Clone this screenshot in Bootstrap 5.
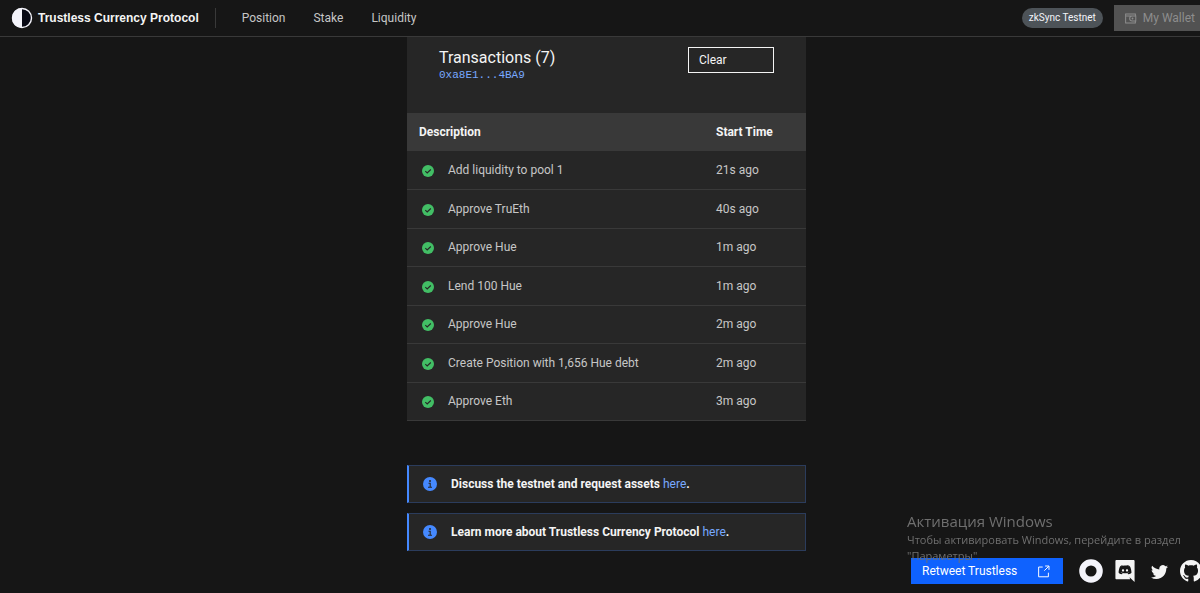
<!DOCTYPE html>
<html lang="en">
<head>
<meta charset="utf-8">
<meta name="viewport" content="width=device-width, initial-scale=1">
<title>Trustless Currency Protocol</title>
<link href="https://cdn.jsdelivr.net/npm/bootstrap@5.3.0/dist/css/bootstrap.min.css" rel="stylesheet">
<style>
  body { background: #161616; color: #f4f4f4; font: 12px/16px Roboto, "Liberation Sans", sans-serif; }
  a { color: #78a9ff; text-decoration: none; }
  .topbar { height: 37px; padding-left: 11px; border-bottom: 1px solid #393939; }
  .brand { color: #f4f4f4; font: 700 12px/20px "Liberation Sans", sans-serif; gap: 5px; }
  .rule { width: 1px; height: 20px; background: #393939; }
  .topnav { gap: 28px; padding-left: 26px; }
  .topnav a { color: #c6c6c6; }
  .net-tag { background: #4d5358; color: #f2f4f8; font-size: 10px; line-height: 20px; padding: 0 7px; }
  .square { border-radius: 0; font: inherit; text-align: left; }
  .wallet { background: #525252; color: #8d8d8d; height: 26px; padding: 0 5px 0 10px; margin-left: 11px; border: 0; gap: 6px; }
  .column { max-width: 412px; padding-left: 13px; }
  .panel { background: #262626; }
  .panel-head { height: 76px; padding: 10px 32px 0; }
  .panel h1 { font-size: 16px; line-height: 22px; font-weight: 400; }
  .address { font: 11px/12px "Liberation Mono", monospace; }
  .clear { width: 86px; height: 26px; border: 1px solid #f4f4f4; background: transparent; color: #f4f4f4; padding: 0 10px; }
  .tx { width: 100%; height: 308px; }
  .tx th { background: #393939; font-weight: 700; padding: 0 12px; height: 38px; }
  .tx td { color: #c6c6c6; border-bottom: 1px solid #393939; padding: 0 12px; height: 38px; }
  .tx .when { width: 102px; }
  .tx svg { width: 12px; height: 12px; margin: 0 14px 0 3px; }
  .notes { margin-top: 44px; gap: 10px; }
  .note { background: #262626; border: 1px solid #2b3c5c; border-left: 2px solid #4589ff; height: 38px; padding: 0 14px; gap: 14px; font-weight: 700; }
  .note a { font-weight: 400; }
  .social { bottom: 9px; }
  .retweet { background: #0f62fe; color: #fff; width: 152px; height: 26px; border: 0; padding: 0 13px 0 11px; }
  .watermark { right: 12px; bottom: 29px; width: 281px; color: #6f6f6f; pointer-events: none; font-family: "Open Sans", "Noto Sans", sans-serif; font-size: 11px; }
  .watermark strong { font-size: 15px; line-height: 22px; font-weight: 400; }
</style>
</head>
<body>
<header class="topbar d-flex align-items-center">
  <a class="brand d-flex align-items-center" href="#">
    <svg width="22" height="22" viewBox="0 0 22 22" aria-hidden="true"><circle cx="11" cy="11" r="9.5" fill="#080914" stroke="#f4f4fb" stroke-width="1.4"/><path d="M11 1a10 10 0 0 0 0 20z" fill="#f4f4fb"/></svg>
    Trustless Currency Protocol
  </a>
  <span class="rule ms-3"></span>
  <nav class="topnav d-flex">
    <a href="#">Position</a>
    <a href="#">Stake</a>
    <a href="#">Liquidity</a>
  </nav>
  <span class="net-tag rounded-pill ms-auto">zkSync Testnet</span>
  <button class="wallet square d-flex align-items-center" type="button" disabled>
    <svg width="13" height="13" viewBox="0 0 32 32" fill="none" stroke="currentColor" stroke-width="2.5" aria-hidden="true"><path d="M28 10V5H4v22h24v-5M4 10h25v12h-9a6 6 0 0 1 0-12"/><circle cx="21" cy="16" r="1"/></svg>
    My Wallet
  </button>
</header>

<main class="column mx-auto">
  <section class="panel">
    <div class="panel-head d-flex justify-content-between">
      <div>
        <h1 class="m-0">Transactions (7)</h1>
        <a class="address d-block" href="#">0xa8E1...4BA9</a>
      </div>
      <button class="clear square" type="button">Clear</button>
    </div>
    <table class="tx">
      <thead><tr><th scope="col">Description</th><th class="when" scope="col">Start Time</th></tr></thead>
      <tbody>
        <tr><td><svg viewBox="0 0 12 12"><use href="#done"/></svg>Add liquidity to pool 1</td><td>21s ago</td></tr>
        <tr><td><svg viewBox="0 0 12 12"><use href="#done"/></svg>Approve TruEth</td><td>40s ago</td></tr>
        <tr><td><svg viewBox="0 0 12 12"><use href="#done"/></svg>Approve Hue</td><td>1m ago</td></tr>
        <tr><td><svg viewBox="0 0 12 12"><use href="#done"/></svg>Lend 100 Hue</td><td>1m ago</td></tr>
        <tr><td><svg viewBox="0 0 12 12"><use href="#done"/></svg>Approve Hue</td><td>2m ago</td></tr>
        <tr><td><svg viewBox="0 0 12 12"><use href="#done"/></svg>Create Position with 1,656 Hue debt</td><td>2m ago</td></tr>
        <tr><td><svg viewBox="0 0 12 12"><use href="#done"/></svg>Approve Eth</td><td>3m ago</td></tr>
      </tbody>
    </table>
  </section>
  <section class="notes d-flex flex-column">
    <div class="note d-flex align-items-center">
      <svg width="14" height="14" viewBox="0 0 14 14"><use href="#info"/></svg>
      <span>Discuss the testnet and request assets <a href="#">here</a>.</span>
    </div>
    <div class="note d-flex align-items-center">
      <svg width="14" height="14" viewBox="0 0 14 14"><use href="#info"/></svg>
      <span>Learn more about Trustless Currency Protocol <a href="#">here</a>.</span>
    </div>
  </section>
</main>

<footer class="social position-fixed end-0 d-flex align-items-center">
  <button class="retweet square d-flex align-items-center justify-content-between me-3" type="button">
    Retweet Trustless
    <svg width="13" height="13" viewBox="0 0 32 32" fill="none" stroke="currentColor" stroke-width="2.4" aria-hidden="true"><path d="M14 5H4v24h24V19M20 2.500h9.500V12M29 3 18 14"/></svg>
  </button>
  <a class="d-flex" href="#" aria-label="Website"><svg width="24" height="24" viewBox="0 0 24 24"><circle cx="12" cy="12" r="8.700" fill="none" stroke="#f4f4fb" stroke-width="6.200"/></svg></a>
  <a class="d-flex ms-2 ps-1" href="#" aria-label="Discord"><svg width="20" height="22" viewBox="35 20 175 201" fill="#f4f4f4"><path d="M104.400 103.900c-5.700 0-10.200 5-10.200 11.100s4.600 11.100 10.200 11.100c5.700 0 10.200-5 10.200-11.100.1-6.100-4.500-11.100-10.200-11.100zM140.900 103.900c-5.700 0-10.200 5-10.200 11.100s4.600 11.100 10.200 11.100c5.700 0 10.200-5 10.200-11.100s-4.500-11.100-10.200-11.100z"/><path d="M200 20H45c-6 0-10 4-10 10v157c0 6 4 10 10 10h124l-5-19 12 12 12 11 22 20V30c0-6-4-10-10-10zm-49.100 130.600s-3.600-4.300-6.600-8.100c13.100-3.700 18.100-11.900 18.100-11.900-4.100 2.700-8 4.600-11.500 5.900-5 2.100-9.800 3.500-14.500 4.300-9.600 1.800-18.400 1.300-25.900-.1-5.700-1.100-10.600-2.700-14.700-4.300-2.300-.9-4.800-2-7.300-3.400l-4.100-2.500s4.800 8 17.500 11.800c-3 3.800-6.700 8.300-6.700 8.300-22.100-.7-30.500-15.200-30.500-15.200 0-32.200 14.400-58.300 14.400-58.300 14.400-10.800 28.100-10.500 28.100-10.500l1 1.200c-18 5.200-26.300 13.100-26.300 13.100s2.200-1.200 5.900-2.900c10.700-4.700 19.200-6 22.700-6.300 8-1 14-1.200 21.900-.4 9.500 1.100 19.700 3.900 30.100 9.600 0 0-7.900-7.500-24.900-12.700l1.400-1.600s13.700-.3 28.100 10.500c0 0 14.400 26.100 14.400 58.300 0 0-8.500 14.500-30.600 15.200z"/></svg></a>
  <a class="d-flex ms-3" href="#" aria-label="Twitter"><svg width="17" height="17" viewBox="0 0 16 16" fill="#f4f4f4"><path d="M5.026 15c6.038 0 9.341-5.003 9.341-9.334 0-.14 0-.282-.006-.422A6.685 6.685 0 0 0 16 3.542a6.658 6.658 0 0 1-1.889.518 3.301 3.301 0 0 0 1.447-1.817 6.533 6.533 0 0 1-2.087.793A3.286 3.286 0 0 0 7.875 6.030a9.325 9.325 0 0 1-6.767-3.429 3.289 3.289 0 0 0 1.018 4.382A3.323 3.323 0 0 1 .64 6.575v.045a3.288 3.288 0 0 0 2.632 3.218 3.203 3.203 0 0 1-.865.115 3.230 3.230 0 0 1-.614-.057 3.283 3.283 0 0 0 3.067 2.277A6.588 6.588 0 0 1 .78 13.580a6.320 6.320 0 0 1-.78-.045A9.344 9.344 0 0 0 5.026 15z"/></svg></a>
  <a class="d-flex ms-2 ps-1" href="#" aria-label="GitHub"><svg width="20" height="22" viewBox="0 0 16 16" preserveAspectRatio="xMinYMid slice" fill="#f4f4f4"><path d="M8 0C3.580 0 0 3.580 0 8c0 3.540 2.290 6.530 5.470 7.590.4.07.55-.17.55-.38 0-.19-.01-.82-.01-1.490-2.010.37-2.530-.49-2.690-.94-.09-.23-.48-.94-.82-1.130-.28-.15-.68-.52-.01-.53.63-.01 1.080.58 1.230.82.72 1.210 1.870.87 2.330.66.07-.52.28-.87.51-1.070-1.780-.2-3.640-.89-3.640-3.950 0-.87.31-1.590.82-2.150-.08-.2-.36-1.020.08-2.120 0 0 .67-.21 2.200.82.64-.18 1.320-.27 2-.27.68 0 1.360.09 2 .27 1.530-1.040 2.200-.82 2.200-.82.44 1.100.16 1.920.08 2.120.51.56.82 1.270.82 2.150 0 3.070-1.870 3.750-3.650 3.950.29.25.54.73.54 1.480 0 1.070-.01 1.930-.01 2.200 0 .21.15.46.55.38A8.012 8.012 0 0 0 16 8c0-4.420-3.580-8-8-8z"/></svg></a>
</footer>

<div class="watermark position-fixed" lang="ru">
  <strong class="d-block">Активация Windows</strong>
  Чтобы активировать Windows, перейдите в раздел "Параметры".
</div>

<svg class="d-none" aria-hidden="true">
  <symbol id="done" viewBox="0 0 12 12"><circle cx="6" cy="6" r="6" fill="#42be65"/><path d="M3.300 6.200 5.200 8 8.800 4.500" fill="none" stroke="#262626" stroke-width="1.100"/></symbol>
  <symbol id="info" viewBox="0 0 14 14"><circle cx="7" cy="7" r="7" fill="#4589ff"/><circle cx="7" cy="4" r="1" fill="#262626"/><path d="M5.500 6.300H7.200V10M5 10.200h4" fill="none" stroke="#262626" stroke-width="1.100"/></symbol>
</svg>
<script src="https://cdn.jsdelivr.net/npm/bootstrap@5.3.0/dist/js/bootstrap.bundle.min.js"></script>
</body>
</html>
